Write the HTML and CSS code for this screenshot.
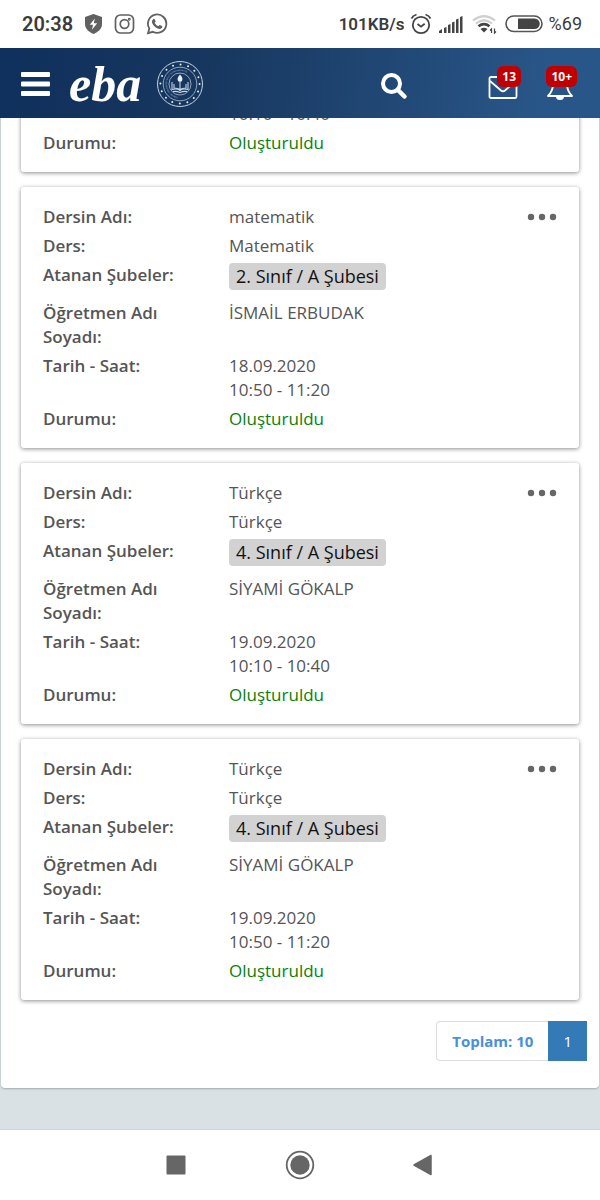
FILE: index.html
```html
<!DOCTYPE html>
<html lang="tr">
<head>
  <meta charset="UTF-8">
  <meta name="viewport" content="width=device-width, initial-scale=1.0">
  <title>EBA - Canlı Dersler</title>
  <link rel="stylesheet" href="styles.css">
</head>
<body>
  <div class="status-bar">
    <div class="status-left">
      <span class="time">20:38</span>
      <svg width="19" height="22" viewBox="0 0 19 22"><path d="M9.500 1 18 4v7c0 5-4 8-8.500 10C5 19 1 16 1 11V4z" fill="#616161"/><path d="M10.800 5.500 5.800 11.800h3.200l-1 5 5.200-6.600H9.800z" fill="#fff"/></svg>
      <svg width="21" height="22" viewBox="0 0 21 22" fill="none" stroke="#616161" stroke-width="1.700"><rect x="1.500" y="2" width="18" height="18" rx="5"/><circle cx="10.500" cy="11" r="4.300"/><circle cx="15.300" cy="6.300" r=".6"/></svg>
      <svg width="22" height="22" viewBox="0 0 22 22"><path d="M2 20.200l1.300-4.700a9.200 9.200 0 1 1 3.500 3.300z" fill="none" stroke="#616161" stroke-width="1.800"/><path d="M7.200 6.200c.6-.6 1.300-.4 1.600.2l.8 1.900c.1.600-.8 1.300-.8 1.600.8 1.500 2 2.600 3.500 3.200.5 0 1.100-1.200 1.600-1.100l2 1c.6.300.4 1.400-.1 2-1.600 1.700-4 .8-6-.5-2-1.400-3.800-3.800-3.900-5.800 0-1 .5-1.800 1.300-2.500z" fill="#616161"/></svg>
    </div>
    <div class="status-right">
      <span class="speed">101KB/s</span>
      <svg width="22" height="22" viewBox="0 0 22 22" fill="none" stroke="#444" stroke-width="1.800"><circle cx="11" cy="12" r="8.200"/><path d="M7.500 11l3.500 2.700 3.700-3M1.500 5.500Q3 2.500 6.500 1.500M15.500 1.500Q19 2.500 20.500 5.500"/></svg>
      <svg class="signal" width="24" height="20" viewBox="0 0 24 20" fill="#444"><path d="M0 19v-2l3-2v4zM5 14l2.500-1v6H5zM9 11l2.500-1v9H9zM13 8.500l2.500-1V19H13zM17 5.500l2.500-1V19H17zM21 3l2.500-1v17H21z"/></svg>
      <svg width="25" height="22" viewBox="0 0 25 22" fill="none" stroke-width="2.200"><path d="M1 7.500Q12 -1 23 7.500M4 10.500Q12 4 20 10.500" stroke="#d0d0d0"/><path d="M6.500 13.300Q12 9 17.500 13.300" stroke="#444" stroke-width="2.600"/><path d="M8.500 16Q12 13.500 15.500 16L12 19.500z" fill="#444"/><path d="M19.500 20v-4l-1.500 1.500M22.500 15.500v4.500l1.500-1.500" stroke="#444" stroke-width="1.200"/></svg>
      <svg class="battery" width="39" height="18" viewBox="0 0 39 18"><rect x="1" y="1" width="36" height="15.500" rx="7.700" fill="none" stroke="#555" stroke-width="1.600"/><path d="M13 3.500h16.500a5.200 5.200 0 0 1 0 10.500H13z" fill="#444"/></svg>
      <span class="percent">%69</span>
    </div>
  </div>

  <header class="header">
    <button class="icon-button" aria-label="Menü">
      <svg width="30" height="26" viewBox="0 0 30 26" fill="#fff"><rect x="1" y="1" width="29" height="5" rx="1"/><rect x="1" y="10.500" width="29" height="5" rx="1"/><rect x="1" y="20" width="29" height="5" rx="1"/></svg>
    </button>
    <a class="logo" href="#">eba</a>
    <svg class="emblem" width="48" height="48" viewBox="0 0 48 48" fill="none" stroke="#c5d3e3">
      <circle cx="24" cy="24" r="22.500" stroke-width="1"/>
      <circle cx="24" cy="24" r="19.600" stroke="#e8eff7" stroke-width="2" stroke-linecap="round" stroke-dasharray="0 7.697"/>
      <circle cx="24" cy="24" r="16.800" stroke-width=".7"/>
      <circle cx="24" cy="24" r="11" stroke-width=".7"/>
      <path id="ring" d="M22 36.800A13 13 0 1 1 26 36.800" stroke="none"/>
      <text class="emblem-text"><textPath href="#ring">TÜRKİYE CUMHURİYETİ MİLLÎ EĞİTİM BAKANLIĞI</textPath></text>
      <path d="M16 22v7.500q5-1.500 8 1 3-2.500 8-1V22M24 30.500V20M18 24v4q4 0 6 1.500 2-1.500 6-1.500v-4M17 31.500q4-.5 7 1 3-1.500 7-1" stroke-width="1.100"/>
      <path d="M24 14.500q4 4 1.500 7h-3q-2.500-3 1.500-7z" fill="#e8eff7" stroke="none"/>
    </svg>
    <nav class="header-actions">
      <button class="icon-button search" aria-label="Ara">
        <svg width="28" height="28" viewBox="0 0 28 28" fill="none" stroke="#fff"><circle cx="11.500" cy="11.500" r="8.500" stroke-width="4"/><path d="M18 18l6.500 6.500" stroke-width="4.500" stroke-linecap="round"/></svg>
      </button>
      <button class="icon-button" aria-label="Mesajlar">
        <svg width="30" height="28" viewBox="0 0 30 28" fill="none" stroke="#fff" stroke-width="1.800"><rect x="1.500" y="5" width="27" height="21" rx="1.500"/><path d="M2 9l11 9.500q2 1.500 4 0L28 9"/></svg>
        <span class="count">13</span>
      </button>
      <button class="icon-button" aria-label="Bildirimler">
        <svg width="28" height="28" viewBox="0 0 28 28" fill="none" stroke="#fff" stroke-width="1.800"><path d="M2 24q5-5 5-12a7 7 0 0 1 14 0q0 7 5 12z" stroke-linejoin="round"/><path d="M10 24.500a4 3.500 0 0 0 8 0z" fill="#fff" stroke="none"/></svg>
        <span class="count">10+</span>
      </button>
    </nav>
  </header>

  <main class="content">
    <section class="panel">
      <article class="card">
        <dl class="details">
          <dt></dt>
          <dd>10:10 - 10:40</dd>
          <dt>Durumu:</dt>
          <dd class="created">Oluşturuldu</dd>
        </dl>
      </article>

      <article class="card">
        <dl class="details">
          <dt>Dersin Adı:</dt>
          <dd>matematik</dd>
          <dt>Ders:</dt>
          <dd>Matematik</dd>
          <dt>Atanan Şubeler:</dt>
          <dd class="branches"><span class="branch">2. Sınıf / A Şubesi</span></dd>
          <dt>Öğretmen Adı Soyadı:</dt>
          <dd>İSMAİL ERBUDAK</dd>
          <dt>Tarih - Saat:</dt>
          <dd>18.09.2020<br>10:50 - 11:20</dd>
          <dt>Durumu:</dt>
          <dd class="created">Oluşturuldu</dd>
        </dl>
        <button class="more" aria-label="Seçenekler">
          <svg width="30" height="8" viewBox="0 0 30 8" fill="#666"><circle cx="4" cy="4" r="3.200"/><circle cx="15" cy="4" r="3.200"/><circle cx="26" cy="4" r="3.200"/></svg>
        </button>
      </article>

      <article class="card">
        <dl class="details">
          <dt>Dersin Adı:</dt>
          <dd>Türkçe</dd>
          <dt>Ders:</dt>
          <dd>Türkçe</dd>
          <dt>Atanan Şubeler:</dt>
          <dd class="branches"><span class="branch">4. Sınıf / A Şubesi</span></dd>
          <dt>Öğretmen Adı Soyadı:</dt>
          <dd>SİYAMİ GÖKALP</dd>
          <dt>Tarih - Saat:</dt>
          <dd>19.09.2020<br>10:10 - 10:40</dd>
          <dt>Durumu:</dt>
          <dd class="created">Oluşturuldu</dd>
        </dl>
        <button class="more" aria-label="Seçenekler">
          <svg width="30" height="8" viewBox="0 0 30 8" fill="#666"><circle cx="4" cy="4" r="3.200"/><circle cx="15" cy="4" r="3.200"/><circle cx="26" cy="4" r="3.200"/></svg>
        </button>
      </article>

      <article class="card">
        <dl class="details">
          <dt>Dersin Adı:</dt>
          <dd>Türkçe</dd>
          <dt>Ders:</dt>
          <dd>Türkçe</dd>
          <dt>Atanan Şubeler:</dt>
          <dd class="branches"><span class="branch">4. Sınıf / A Şubesi</span></dd>
          <dt>Öğretmen Adı Soyadı:</dt>
          <dd>SİYAMİ GÖKALP</dd>
          <dt>Tarih - Saat:</dt>
          <dd>19.09.2020<br>10:50 - 11:20</dd>
          <dt>Durumu:</dt>
          <dd class="created">Oluşturuldu</dd>
        </dl>
        <button class="more" aria-label="Seçenekler">
          <svg width="30" height="8" viewBox="0 0 30 8" fill="#666"><circle cx="4" cy="4" r="3.200"/><circle cx="15" cy="4" r="3.200"/><circle cx="26" cy="4" r="3.200"/></svg>
        </button>
      </article>

      <div class="pagination">
        <span class="total">Toplam: 10</span>
        <a class="page" href="#">1</a>
      </div>
    </section>
  </main>

  <nav class="system-nav">
    <button class="icon-button" aria-label="Son uygulamalar">
      <svg width="30" height="30" viewBox="0 0 30 30"><rect x="5.500" y="5.500" width="19" height="19" rx="1" fill="#666"/></svg>
    </button>
    <button class="icon-button" aria-label="Ana ekran">
      <svg width="30" height="30" viewBox="0 0 30 30"><circle cx="15" cy="15" r="13.300" fill="none" stroke="#666" stroke-width="1.800"/><circle cx="15" cy="15" r="9.700" fill="#666"/></svg>
    </button>
    <button class="icon-button" aria-label="Geri">
      <svg width="30" height="30" viewBox="0 0 30 30"><path d="M5 15L22 5.500v19z" fill="#666" stroke="#666" stroke-width="1.500" stroke-linejoin="round"/></svg>
    </button>
  </nav>
</body>
</html>
```
FILE: styles.css
```css
* {
  box-sizing: border-box;
}
body {
  display: flex;
  flex-direction: column;
  height: 100vh;
  margin: 0;
  background-color: #fff;
  color: #555;
  font-family: "Open Sans", "Noto Sans", sans-serif;
  font-size: 17px;
  line-height: 24px;
}
svg {
  display: block;
}
button {
  border: none;
  padding: 0;
  background: none;
  cursor: pointer;
}
.icon-button {
  position: relative;
}

/* phone status bar */
.status-bar {
  display: flex;
  justify-content: space-between;
  align-items: center;
  height: 48px;
  flex-shrink: 0;
  padding: 0 18px 0 22px;
  color: #3c3c3c;
  font-family: Roboto, sans-serif;
}
.status-left {
  display: flex;
  align-items: center;
  gap: 11px;
}
.status-right {
  display: flex;
  align-items: center;
  gap: 5px;
}
.time {
  font-size: 20px;
  font-weight: 600;
}
.speed {
  font-size: 17px;
  font-weight: 600;
}
.percent {
  font-size: 18px;
}
.signal {
  margin: 0 4px 0 2px;
}
.battery {
  margin-left: 3px;
}

/* header */
.header {
  display: flex;
  align-items: center;
  height: 70px;
  flex-shrink: 0;
  padding: 2px 26px 0 20px;
  background: linear-gradient(100deg, #10305d, #17375f 35%, #295688 90%);
}
.logo {
  margin-left: 19px;
  color: #fff;
  font-family: "Liberation Serif", serif;
  font-size: 50px;
  font-style: italic;
  font-weight: bold;
  line-height: 60px;
  text-decoration: none;
}
.emblem {
  margin-left: 15px;
  overflow: visible;
}
.emblem-text {
  fill: #c5d3e3;
  stroke: none;
  font-size: 2px;
}
.header-actions {
  display: flex;
  align-items: center;
  gap: 28px;
  margin-left: auto;
  padding-top: 3px;
}
.search {
  margin-right: 52px;
}
.count {
  position: absolute;
  top: -6px;
  right: -3px;
  padding: 0 5px;
  border-radius: 6px;
  background-color: #c00000;
  color: #fff;
  font-family: "Open Sans", sans-serif;
  font-size: 12px;
  font-weight: bold;
  line-height: 21px;
}

/* the list is scrolled to its end */
.content {
  display: flex;
  flex-direction: column;
  justify-content: flex-end;
  flex: 1;
  min-height: 0;
  overflow: hidden;
  padding-bottom: 41px;
  border-bottom: 1px solid #d0d5d6;
  background-color: #dae1e4;
}
.panel {
  display: flex;
  flex-direction: column;
  gap: 15px;
  margin: 0 1px;
  padding: 0 20px 27px;
  border-radius: 4px;
  background-color: #fff;
  box-shadow: 0 1px 2px rgba(0, 0, 0, 0.25);
}
.card {
  display: flex;
  align-items: flex-start;
  padding: 18px 22px 17px;
  border-radius: 3px;
  background-color: #fff;
  box-shadow: 0 1px 4px rgba(0, 0, 0, 0.45);
}
.details {
  display: grid;
  grid-template-columns: 170px 1fr;
  gap: 5px 16px;
  flex: 1;
  margin: 0;
}
dt {
  font-weight: 600;
}
dd {
  margin: 0;
}
.created {
  color: #0a800a;
}
.branches {
  padding-bottom: 6px;
}
.branch {
  display: inline-block;
  padding: 0 7px;
  border-radius: 4px;
  background-color: #d2d2d2;
  color: #111;
  font-size: 18px;
  line-height: 27px;
  vertical-align: top;
}
.more {
  padding: 8px 0;
}

.pagination {
  display: flex;
  justify-content: flex-end;
  margin: 6px -8px 0 0;
  font-size: 15px;
  line-height: 38px;
}
.total {
  padding: 0 15px;
  border: 1px solid #ddd;
  border-right: none;
  border-radius: 4px 0 0 4px;
  color: #4a90d9;
  font-weight: bold;
}
.page {
  padding: 1px 15px;
  background-color: #337ab7;
  color: #fff;
  text-decoration: none;
}

/* phone navigation */
.system-nav {
  display: flex;
  justify-content: center;
  align-items: center;
  gap: 94px;
  height: 70px;
  flex-shrink: 0;
}
```
